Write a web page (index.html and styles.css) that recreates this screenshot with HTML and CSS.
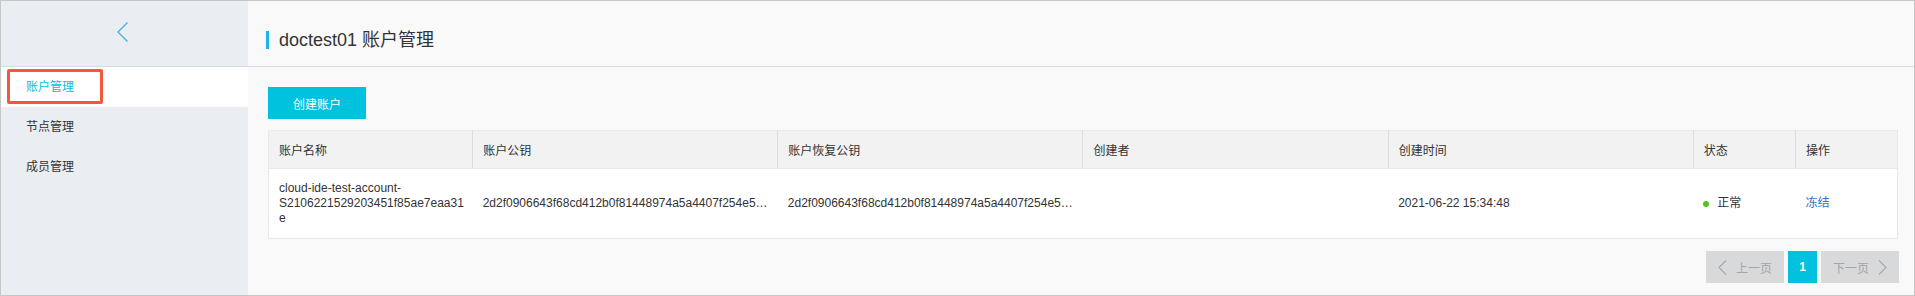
FILE: index.html
```html
<!DOCTYPE html>
<html lang="zh-CN">
<head>
<meta charset="utf-8">
<title>账户管理</title>
<link rel="stylesheet" href="styles.css">
</head>
<body>
<div class="frame">
  <aside class="sidebar">
    <div class="side-top">
      <svg class="collapse" width="14" height="22" viewBox="0 0 14 22"><polyline points="11.5,1.5 2,11 11.5,20.5" fill="none" stroke="#45b3e4" stroke-width="1.4"/></svg>
    </div>
    <nav class="side-nav">
      <a class="nav-item active">账户管理<span class="annot"></span></a>
      <a class="nav-item">节点管理</a>
      <a class="nav-item">成员管理</a>
    </nav>
  </aside>
  <main class="main">
    <header class="page-head">
      <h1 class="title">doctest01 账户管理</h1>
    </header>
    <section class="content">
      <button class="btn-primary">创建账户</button>
      <table class="grid">
        <colgroup>
          <col class="c-name"><col class="c-key"><col class="c-key"><col class="c-key"><col class="c-key"><col class="c-small"><col class="c-small">
        </colgroup>
        <thead>
          <tr><th>账户名称</th><th>账户公钥</th><th>账户恢复公钥</th><th>创建者</th><th>创建时间</th><th>状态</th><th>操作</th></tr>
        </thead>
        <tbody>
          <tr>
            <td class="wrap">cloud-ide-test-account-S2106221529203451f85ae7eaa31e</td>
            <td class="ellipsis">2d2f0906643f68cd412b0f81448974a5a4407f254e5a6c1d93e0b7f2</td>
            <td class="ellipsis">2d2f0906643f68cd412b0f81448974a5a4407f254e5a6c1d93e0b7f2</td>
            <td></td>
            <td>2021-06-22 15:34:48</td>
            <td><span class="dot"></span><span class="status">正常</span></td>
            <td><a class="link">冻结</a></td>
          </tr>
        </tbody>
      </table>
      <div class="pager">
        <span class="pg pg-disabled"><svg width="9" height="15" viewBox="0 0 9 15"><polyline points="8,0.5 1,7.5 8,14.5" fill="none" stroke="#a9abad" stroke-width="1.2"/></svg>上一页</span>
        <span class="pg pg-num">1</span>
        <span class="pg pg-disabled">下一页<svg width="9" height="15" viewBox="0 0 9 15"><polyline points="1,0.5 8,7.5 1,14.5" fill="none" stroke="#a9abad" stroke-width="1.2"/></svg></span>
      </div>
    </section>
  </main>
</div>
</body>
</html>
```

FILE: styles.css
```css
html, body {
  margin: 0;
  padding: 0;
}
body {
  font-family: "Liberation Sans", "Noto Sans CJK SC", sans-serif;
  font-size: 12px;
  color: #333;
}
.frame {
  width: 1915px;
  height: 296px;
  box-sizing: border-box;
  border: 1px solid #c6c6c6;
  display: flex;
  background: #f9f9f9;
  position: relative;
}
.sidebar {
  width: 247px;
  flex: none;
  background: #eaedf1;
}
.side-top {
  height: 65px;
  border-bottom: 1px solid #d8dadd;
  display: flex;
  justify-content: center;
  align-items: center;
}
.collapse {
  margin-top: -4px;
  margin-left: -3px;
}
.side-nav {
  display: flex;
  flex-direction: column;
}
.nav-item {
  display: block;
  height: 40px;
  line-height: 40px;
  padding-left: 25px;
  color: #333;
  position: relative;
}
.nav-item.active {
  background: #fff;
  color: #00c1de;
}
.annot {
  position: absolute;
  left: 6px;
  top: 2px;
  width: 96px;
  height: 35px;
  box-sizing: border-box;
  border: 3px solid #ef5a3c;
  border-radius: 2px;
}
.main {
  flex: 1;
  display: flex;
  flex-direction: column;
  min-width: 0;
}
.page-head {
  height: 65px;
  box-sizing: border-box;
  border-bottom: 1px solid #d8dadd;
  padding: 12px 0 0 18px;
  display: flex;
  align-items: center;
  height: 66px;
}
.title {
  margin: 0;
  font-size: 18px;
  font-weight: normal;
  line-height: 18px;
  color: #333;
  border-left: 3px solid #1db4ec;
  padding-left: 10px;
}
.content {
  padding: 20px 16px 0 20px;
}
.btn-primary {
  display: block;
  width: 98px;
  height: 32px;
  border: none;
  background: #00c1de;
  color: #fff;
  font-family: inherit;
  font-size: 12px;
  padding: 0;
}
.grid {
  margin-top: 11px;
  width: 100%;
  table-layout: fixed;
  border-collapse: collapse;
  border: 1px solid #e7eaed;
}
.c-name { width: 204px; }
.c-key { width: 305px; }
.c-small { width: 102px; }
.grid th {
  height: 37px;
  padding: 0 10px;
  background: #f2f2f2;
  text-align: left;
  font-weight: normal;
  color: #333;
  border-bottom: 1px solid #e7eaed;
}
.grid th + th {
  border-left: 1px solid #dcdcdc;
}
.grid td {
  height: 69px;
  padding: 0 10px;
  background: #fff;
  vertical-align: middle;
  line-height: 15px;
  color: #333;
}
.grid td.wrap {
  padding-right: 3px;
  overflow-wrap: break-word;
}
.grid td.ellipsis {
  white-space: nowrap;
  overflow: hidden;
  text-overflow: ellipsis;
}
.dot {
  display: inline-block;
  width: 6px;
  height: 6px;
  border-radius: 50%;
  background: #55c21f;
  margin-right: 8px;
  vertical-align: middle;
}
.status {
  vertical-align: middle;
}
.link {
  color: #1f78d4;
  cursor: pointer;
}
.pager {
  margin-top: 12px;
  display: flex;
  justify-content: flex-end;
  gap: 4px;
  margin-right: -1px;
}
.pg {
  height: 32px;
  width: 78px;
  display: flex;
  align-items: center;
  justify-content: center;
  gap: 9px;
  box-sizing: border-box;
}
.pg-disabled {
  background: #d8d9db;
  color: #a3a5a7;
}
.pg-num {
  width: 29px;
  background: #00c1de;
  color: #fff;
  font-weight: bold;
}
```
